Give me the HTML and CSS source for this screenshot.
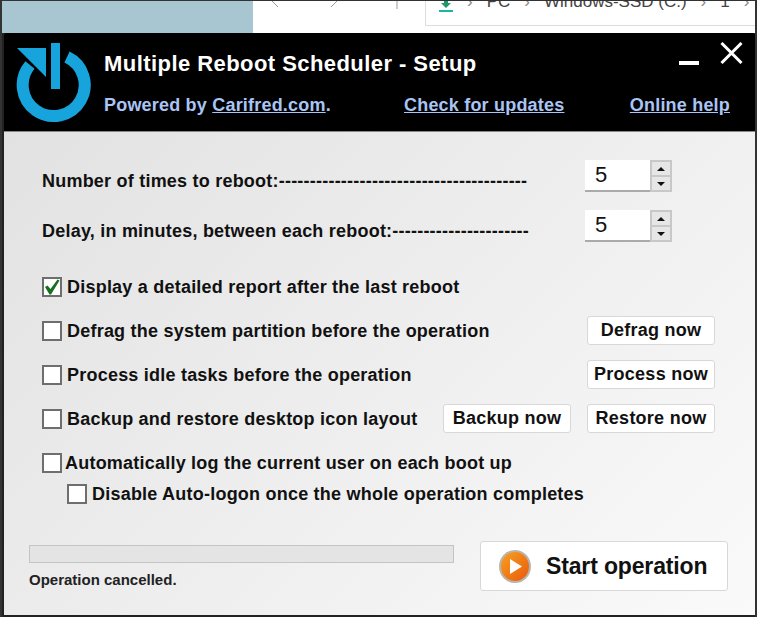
FILE: index.html
```html
<!DOCTYPE html>
<html>
<head>
    <title>Multiple Reboot Scheduler - Setup</title>
    <link rel="stylesheet" href="styles.css">
</head>
<body>
    <div class="desktop">
        <div class="wallpaper"></div>
        <div class="explorer">
            <div class="nav-arrows">
                <svg width="150" height="8" viewBox="0 0 150 8">
                    <path d="M19 0 L25 6 M78 6 L84 0 M144 0 L144 8" fill="none" stroke="#999" stroke-width="1"/>
                </svg>
            </div>
            <div class="address">
                <svg class="address-icon" width="14" height="11" viewBox="0 0 14 11">
                    <path d="M5 0h4v2h3l-5 5-5-5h3z" fill="#1d9a6c"/>
                    <rect x="0" y="9" width="14" height="2" fill="#19b5a5"/>
                </svg>
                <span class="crumb-sep">&#8250;</span>
                <span class="crumb">PC</span>
                <span class="crumb-sep">&#8250;</span>
                <span class="crumb">Windows-SSD (C:)</span>
                <span class="crumb-sep">&#8250;</span>
                <span class="crumb">1</span>
                <span class="crumb-sep">&#8250;</span>
            </div>
        </div>
    </div>

    <div class="window">
        <div class="header">
            <svg class="logo" width="76" height="82" viewBox="0 0 76 82">
                <path d="M51 16 A31 31 0 1 1 14 24" fill="none" stroke="#17a3dc" stroke-width="12"/>
                <path d="M1 7 L30 7 L30 36 Z" fill="#17a3dc"/>
                <rect x="35" y="2" width="9" height="46" fill="#17a3dc"/>
            </svg>
            <div class="header-text">
                <div class="title-row">
                    <h1 class="title">Multiple Reboot Scheduler - Setup</h1>
                    <div class="window-buttons">
                        <span class="min-btn"></span>
                        <svg class="close-btn" width="23" height="22" viewBox="0 0 23 22">
                            <path d="M1.500 1 L21.500 21 M21.500 1 L1.500 21" stroke="#fff" stroke-width="3"/>
                        </svg>
                    </div>
                </div>
                <div class="link-row">
                    <span class="powered">Powered by <a class="link">Carifred.com</a>.</span>
                    <a class="link">Check for updates</a>
                    <a class="link help">Online help</a>
                </div>
            </div>
        </div>

        <div class="content">
            <div class="setting-row first">
                <span class="label">Number of times to reboot:----------------------------------------</span>
                <div class="spinner">
                    <div class="spinner-value">5</div>
                    <div class="spinner-arrows">
                        <span class="arrow-btn"><i class="arrow-up"></i></span>
                        <span class="arrow-btn"><i class="arrow-down"></i></span>
                    </div>
                </div>
            </div>
            <div class="setting-row second">
                <span class="label">Delay, in minutes, between each reboot:----------------------</span>
                <div class="spinner">
                    <div class="spinner-value">5</div>
                    <div class="spinner-arrows">
                        <span class="arrow-btn"><i class="arrow-up"></i></span>
                        <span class="arrow-btn"><i class="arrow-down"></i></span>
                    </div>
                </div>
            </div>

            <div class="option-row report">
                <span class="checkbox">
                    <svg width="16" height="16" viewBox="0 0 16 16">
                        <path d="M1 8 L3.500 6.500 L6.500 10 L13.500 0.500 L15.500 1.500 L7 15.500 L5.500 15.500 Z" fill="#17701f"/>
                    </svg>
                </span>
                <span class="label">Display a detailed report after the last reboot</span>
            </div>
            <div class="option-row">
                <span class="checkbox"></span>
                <span class="label">Defrag the system partition before the operation</span>
                <button class="action first-action" type="button">Defrag now</button>
            </div>
            <div class="option-row">
                <span class="checkbox"></span>
                <span class="label">Process idle tasks before the operation</span>
                <button class="action first-action" type="button">Process now</button>
            </div>
            <div class="option-row">
                <span class="checkbox"></span>
                <span class="label">Backup and restore desktop icon layout</span>
                <button class="action first-action" type="button">Backup now</button>
                <button class="action" type="button">Restore now</button>
            </div>
            <div class="option-row auto">
                <span class="checkbox"></span>
                <span class="label">Automatically log the current user on each boot up</span>
            </div>
            <div class="option-row sub">
                <span class="checkbox"></span>
                <span class="label">Disable Auto-logon once the whole operation completes</span>
            </div>

            <div class="footer">
                <div class="status">
                    <div class="progress"></div>
                    <div class="status-text">Operation cancelled.</div>
                </div>
                <button class="start" type="button">
                    <svg width="32" height="33" viewBox="0 0 32 33">
                        <defs>
                            <linearGradient id="orange" x1="0" y1="0" x2="1" y2="1">
                                <stop offset="0" stop-color="#f9a020"/>
                                <stop offset="1" stop-color="#e85a0c"/>
                            </linearGradient>
                        </defs>
                        <ellipse cx="16" cy="16.500" rx="16" ry="16.500" fill="#b9b4ae"/>
                        <ellipse cx="16" cy="16.500" rx="14" ry="14.500" fill="url(#orange)"/>
                        <path d="M11 9 L23 16.500 L11 24 Z" fill="#fff"/>
                    </svg>
                    <span>Start operation</span>
                </button>
            </div>
        </div>
    </div>
</body>
</html>
```

FILE: styles.css
```css
html, body {
    margin: 0;
    height: 617px;
    overflow: hidden;
}
body {
    width: 757px;
    background: #222;
    font-family: "Liberation Sans", sans-serif;
    box-sizing: border-box;
    border-top: 1px solid #333;
    border-left: 2px solid #333;
    border-right: 2px solid #333;
}
.desktop {
    display: flex;
    height: 32px;
}
.wallpaper {
    width: 251px;
    background: #a7c6d2;
}
.explorer {
    flex: 1;
    display: flex;
    background: #fff;
    overflow: hidden;
    font-size: 17px;
    color: #444;
}
.nav-arrows {
    width: 172px;
    flex: none;
}
.nav-arrows svg {
    display: block;
}
.address {
    height: 24px;
    flex: 1;
    display: flex;
    gap: 14px;
    padding-left: 13px;
    border-left: 1px solid #ddd;
    border-bottom: 1px solid #ddd;
    white-space: nowrap;
}
.address-icon {
    flex: none;
}
.crumb {
    margin-top: -9px;
}
.crumb-sep {
    margin-top: -9px;
    color: #888;
}

.window {
    width: 751px;
    height: 582px;
    margin-left: 2px;
    border-radius: 3px 3px 0 0;
    overflow: hidden;
}
.header {
    height: 99px;
    background: #000;
    display: flex;
    border-bottom: 1px solid #888;
    box-sizing: border-box;
}
.logo {
    flex: none;
    margin: 8px 0 0 12px;
}
.header-text {
    flex: 1;
    margin-left: 12px;
}
.title-row {
    display: flex;
    justify-content: space-between;
    height: 62px;
    padding-right: 12px;
}
.title {
    margin: 18px 0 0;
    font-size: 22px;
    font-weight: bold;
    letter-spacing: 0.44px;
    color: #fff;
}
.window-buttons {
    display: flex;
    align-items: flex-start;
}
.min-btn {
    width: 20px;
    height: 4px;
    background: #fff;
    margin: 28px 21px 0 0;
}
.close-btn {
    margin-top: 9px;
}
.link-row {
    display: flex;
    padding-right: 25px;
    font-size: 18px;
    font-weight: bold;
    letter-spacing: 0.2px;
    color: #a9c4f5;
}
.link {
    color: #a9c4f5;
    text-decoration: underline;
}
.powered {
    width: 300px;
}
.help {
    margin-left: auto;
}

.content {
    height: 483px;
    box-sizing: border-box;
    padding: 0 40px 0 25px;
    background: linear-gradient(135deg, #e2e2e2, #fafafa);
}
.label {
    font-size: 18px;
    font-weight: bold;
    letter-spacing: 0.22px;
    color: #111;
    white-space: nowrap;
}
.setting-row {
    display: flex;
    justify-content: space-between;
    align-items: center;
    height: 32px;
    margin-right: -40px;
    padding-right: 83px;
    padding-left: 13px;
}
.setting-row .label {
    margin-top: 10px;
}
.setting-row.first {
    padding-top: 28px;
}
.setting-row.second {
    margin-top: 18px;
}
.spinner {
    width: 87px;
    height: 32px;
    display: flex;
    flex: none;
}
.spinner-value {
    flex: 1;
    background: #fff;
    border-bottom: 2px solid #aaa;
    font-size: 22px;
    line-height: 30px;
    padding-left: 10px;
    color: #111;
}
.spinner-arrows {
    width: 18px;
    padding: 2px;
    display: flex;
    flex-direction: column;
    gap: 2px;
    background: #c8c8c8;
}
.arrow-btn {
    flex: 1;
    display: flex;
    align-items: center;
    justify-content: center;
    background: #e6e6e6;
}
.arrow-up, .arrow-down {
    width: 0;
    height: 0;
    border-left: 4px solid transparent;
    border-right: 4px solid transparent;
}
.arrow-up {
    border-bottom: 4px solid #111;
}
.arrow-down {
    border-top: 4px solid #111;
}
.option-row {
    display: flex;
    align-items: center;
    height: 28px;
    margin-top: 16px;
    padding-left: 13px;
}
.option-row.report {
    margin-top: 31px;
}
.option-row.auto {
    height: 20px;
    margin-top: 20px;
}
.option-row.auto .checkbox {
    margin-right: 3px;
}
.option-row.sub {
    height: 20px;
    margin-top: 11px;
    padding-left: 38px;
}
.checkbox {
    width: 16px;
    height: 16px;
    flex: none;
    margin-right: 5px;
    background: #fff;
    border: 2px solid #6e6e6e;
    display: block;
}
.checkbox svg {
    display: block;
}
.action {
    height: 29px;
    width: 128px;
    margin-top: -2px;
    padding: 0;
    background: #fff;
    border: 1px solid #d8d8d8;
    border-radius: 3px;
    font-family: inherit;
    font-size: 18px;
    font-weight: bold;
    letter-spacing: 0.25px;
    color: #111;
}
.first-action {
    margin-left: auto;
}
.option-row .action:not(.first-action) {
    margin-left: 16px;
}
.footer {
    display: flex;
    justify-content: space-between;
    margin-top: 37px;
    margin-right: -13px;
}
.status {
    width: 425px;
    padding-top: 4px;
}
.progress {
    height: 16px;
    background: #e4e4e4;
    border: 1px solid #c4c4c4;
}
.status-text {
    margin-top: 8px;
    font-size: 15px;
    font-weight: bold;
    color: #222;
}
.start {
    width: 248px;
    height: 50px;
    display: flex;
    align-items: center;
    gap: 15px;
    padding: 0 0 0 18px;
    background: #fff;
    border: 1px solid #d8d8d8;
    border-radius: 3px;
    font-family: inherit;
    font-size: 23px;
    font-weight: bold;
    letter-spacing: -0.15px;
    color: #111;
}
```
